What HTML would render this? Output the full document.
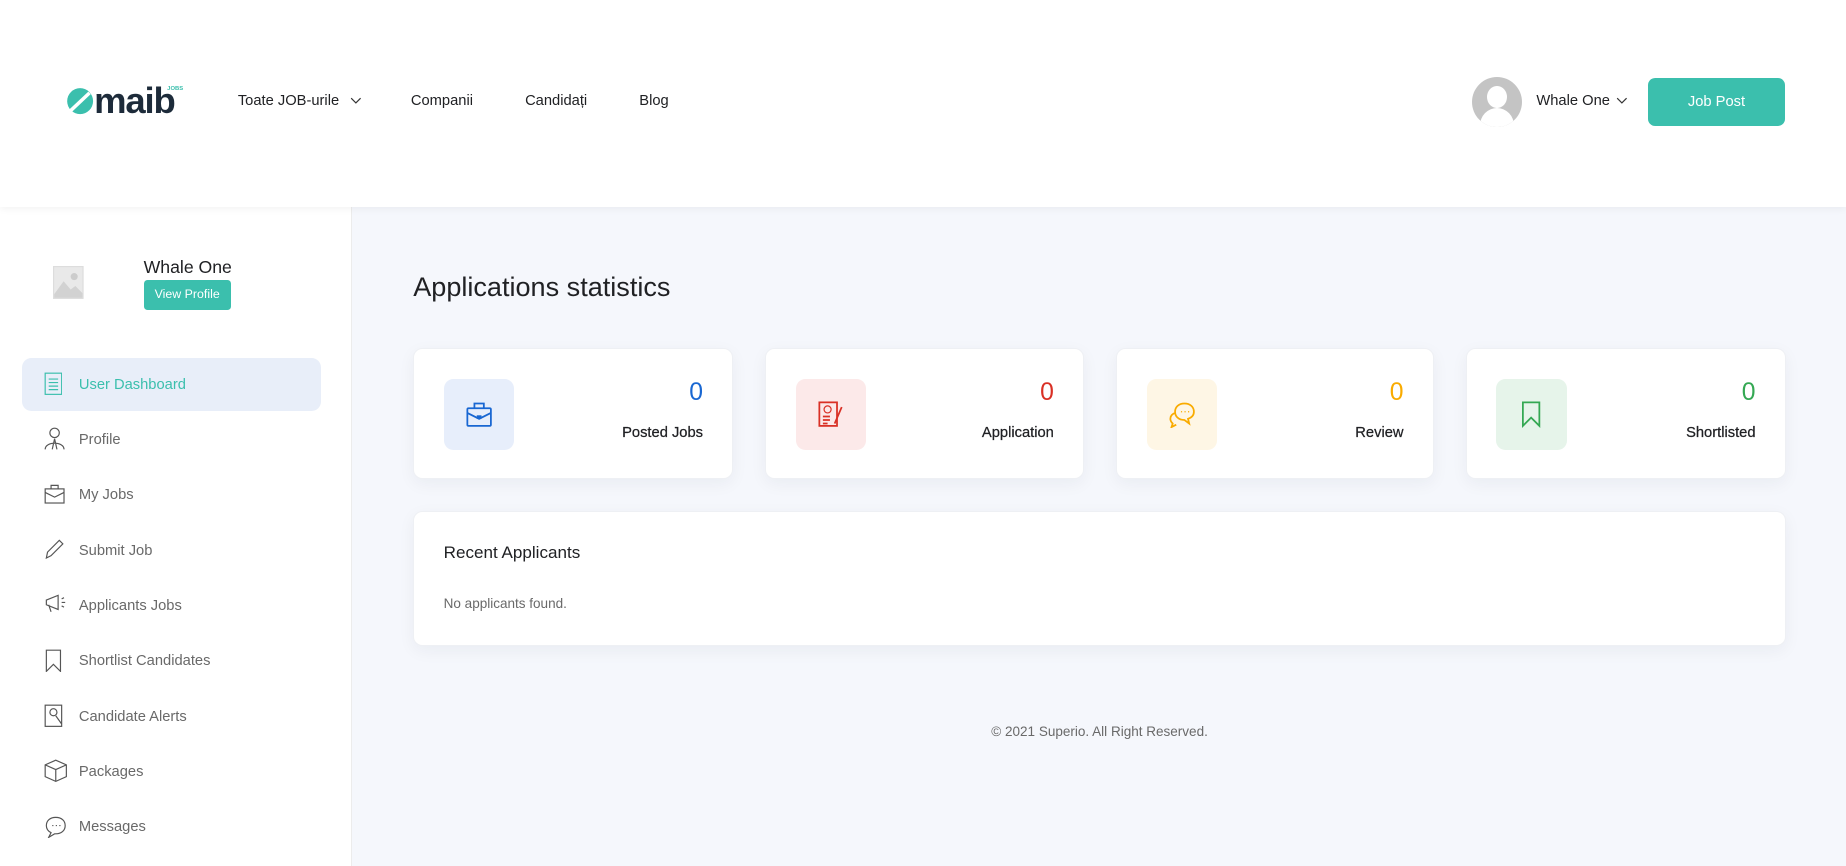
<!DOCTYPE html>
<html><head><meta charset="utf-8"><style>
html,body{margin:0;padding:0;}
body{width:1846px;height:851px;overflow:hidden;background:#f5f7fc;font-family:"Liberation Sans",sans-serif;}
#w{zoom:1.17730;width:1568px;height:723px;position:relative;}
.a{position:absolute;}
header{position:absolute;left:0;top:0;width:1568px;height:176px;background:#fff;box-shadow:0 2px 6px rgba(0,0,0,.05);z-index:2}
.nav{font-size:12.5px;color:#202124;top:79px;}
aside{position:absolute;left:0;top:176px;width:298px;height:560px;background:#fff;border-right:1px solid #ececec}
.mi{position:absolute;left:19px;width:254px;height:45px;font-size:12.5px;color:#696969;}
.mi span{position:absolute;left:48px;top:16px}
.mi svg{position:absolute;left:18px;top:12px}
.card{position:absolute;top:296px;height:111px;background:#fff;border-radius:8px;box-shadow:0 4px 14px rgba(20,30,60,.05);border:1px solid #eef0f4;box-sizing:border-box}
.ib{position:absolute;left:25px;top:25px;width:60px;height:60px;border-radius:8px}
.ib svg{position:absolute;left:18px;top:18px}
.num{position:absolute;right:25px;top:25px;font-size:21px;}
.lab{position:absolute;right:25px;top:64px;font-size:12.5px;color:#202124;font-weight:500;-webkit-text-stroke:0.2px #202124}
</style></head><body><div id="w">
<header>
 <svg class="a" style="left:56px;top:74px" width="24" height="24" viewBox="0 0 24 24"><circle cx="12" cy="12" r="11" fill="#3bbfad"/><path d="M4 20 L20 5" stroke="#fff" stroke-width="3"/></svg>
 <div class="a" style="left:80px;top:68px;font-size:31px;font-weight:bold;color:#1d2b3a;letter-spacing:-1px">maib</div>
 <div class="a" style="left:142px;top:73px;font-size:5px;color:#3bbfad;font-weight:bold">JOBS</div>
 <div class="a nav" style="left:202px">Toate JOB-urile</div>
 <svg class="a" style="left:297px;top:82px" width="10" height="6" viewBox="0 0 10 6"><path d="M1 1 L5 5 L9 1" fill="none" stroke="#333" stroke-width="1"/></svg>
 <div class="a nav" style="left:349px">Companii</div>
 <div class="a nav" style="left:446px">Candidați</div>
 <div class="a nav" style="left:543px">Blog</div>
 <div class="a" style="left:1250px;top:65px;width:43px;height:43px;border-radius:50%;background:#c4c4c4;overflow:hidden">
  <div class="a" style="left:13px;top:8px;width:17px;height:19px;border-radius:50%;background:#fff"></div>
  <div class="a" style="left:7px;top:27px;width:29px;height:30px;border-radius:50%;background:#fff"></div></div>
 <div class="a nav" style="left:1305px">Whale One</div>
 <svg class="a" style="left:1373px;top:82px" width="10" height="6" viewBox="0 0 10 6"><path d="M1 1 L5 5 L9 1" fill="none" stroke="#333" stroke-width="1"/></svg>
 <div class="a" style="left:1400px;top:66px;width:116px;height:41px;background:#3bbfad;border-radius:6px;color:#fff;font-size:12.5px;text-align:center;line-height:41px">Job Post</div>
</header>
<aside>
 <svg class="a" style="left:45px;top:50px" width="26" height="28" viewBox="0 0 26 28"><rect x="0.5" y="0.5" width="25" height="27" fill="#e9e9e9" stroke="#ddd"/><circle cx="18" cy="9" r="3" fill="#ccc"/><path d="M1 24 L9 13 L15 20 L19 17 L25 23 V27 H1Z" fill="#d2d2d2"/></svg>
 <div class="a" style="left:122px;top:42px;font-size:15px;color:#202124">Whale One</div>
 <div class="a" style="left:122px;top:62px;width:74px;height:25px;background:#3bbfad;border-radius:3px;color:#fff;font-size:10.5px;text-align:center;line-height:25px">View Profile</div>
 <div class="mi" style="top:128px;background:#e8eef9;border-radius:8px;color:#3bbfad"><svg width="16" height="20" viewBox="0 0 16 20"><rect x="1" y="1" width="14" height="18" fill="none" stroke="#3bbfad"/><path d="M4 6h8M4 9h8M4 12h8M4 15h8" stroke="#3bbfad"/></svg><span>User Dashboard</span></div>
 <div class="mi" style="top:175px"><svg width="18" height="20" viewBox="0 0 18 20"><circle cx="9" cy="5" r="4" fill="none" stroke="#555"/><path d="M1 19 C1 12 17 12 17 19 M9 10 L7 19 M9 10 L11 19" fill="none" stroke="#555"/></svg><span>Profile</span></div>
 <div class="mi" style="top:222px"><svg width="18" height="18" viewBox="0 0 18 18"><rect x="1" y="5" width="16" height="12" fill="none" stroke="#555"/><path d="M6 5V2h6v3M1 8l8 4 8-4" fill="none" stroke="#555"/></svg><span>My Jobs</span></div>
 <div class="mi" style="top:269px"><svg width="18" height="18" viewBox="0 0 18 18"><path d="M2 17 L3 12 L13 2 L16 5 L6 15Z" fill="none" stroke="#555"/></svg><span>Submit Job</span></div>
 <div class="mi" style="top:316px"><svg width="20" height="18" viewBox="0 0 20 18"><path d="M2 6 L12 2 V14 L2 10Z M4 10 L6 16" fill="none" stroke="#555"/><path d="M15 5l2-1M15 8h3M15 11l2 1" stroke="#555"/></svg><span>Applicants Jobs</span></div>
 <div class="mi" style="top:363px"><svg width="16" height="20" viewBox="0 0 16 20"><path d="M2 1H14V19L8 13L2 19Z" fill="none" stroke="#555"/></svg><span>Shortlist Candidates</span></div>
 <div class="mi" style="top:410px"><svg width="18" height="20" viewBox="0 0 18 20"><rect x="1" y="1" width="14" height="18" fill="none" stroke="#555"/><circle cx="8" cy="7" r="3" fill="none" stroke="#555"/><path d="M10 10l5 7" stroke="#555"/></svg><span>Candidate Alerts</span></div>
 <div class="mi" style="top:457px"><svg width="20" height="20" viewBox="0 0 20 20"><path d="M10 1L19 5V15L10 19L1 15V5Z M1 5L10 9L19 5M10 9V19" fill="none" stroke="#555"/></svg><span>Packages</span></div>
 <div class="mi" style="top:504px"><svg width="20" height="20" viewBox="0 0 20 20"><path d="M10 2C5 2 2 5 2 9c0 3 2 5 4 6l-2 4 5-3h1c5 0 8-3 8-7S15 2 10 2Z" fill="none" stroke="#555"/><path d="M7 9h1M10 9h1M13 9h1" stroke="#555"/></svg><span>Messages</span></div>
</aside>
<div class="a" style="left:351px;top:230px;font-size:23px;color:#202124">Applications statistics</div>
<div class="card" style="left:351px;width:272px"><div class="ib" style="background:#e7eefb"><svg width="24" height="24" viewBox="0 0 24 24"><rect x="2" y="7" width="20" height="15" rx="1" fill="none" stroke="#1967d2" stroke-width="1.5"/><path d="M8 7V3h8v4M2 11l10 5 10-5" fill="none" stroke="#1967d2" stroke-width="1.5"/><rect x="10" y="13" width="4" height="3" fill="#1967d2"/></svg></div><div class="num" style="color:#1967d2">0</div><div class="lab">Posted Jobs</div></div>
<div class="card" style="left:650px;width:271px"><div class="ib" style="background:#fce9e9"><svg width="24" height="24" viewBox="0 0 24 24"><rect x="2" y="2" width="15" height="20" fill="none" stroke="#d93025" stroke-width="1.5"/><circle cx="9" cy="8" r="3" fill="none" stroke="#d93025"/><path d="M5 14h6M5 17h6M5 20h4M21 6L15 20" stroke="#d93025" stroke-width="1.5"/></svg></div><div class="num" style="color:#d93025">0</div><div class="lab">Application</div></div>
<div class="card" style="left:948px;width:270px"><div class="ib" style="background:#fef6e5"><svg width="24" height="24" viewBox="0 0 24 24"><path d="M14 3c-5 0-8 3-8 7s3 7 8 7l4 3-1-4c3-1 5-3 5-6 0-4-3-7-8-7Z M6 11c-3 1-4 3-4 5s1 3 2 4l-1 3 4-2" fill="none" stroke="#f9ab00" stroke-width="1.5"/><path d="M11 10h1M14 10h1M17 10h1" stroke="#f9ab00"/></svg></div><div class="num" style="color:#f9ab00">0</div><div class="lab">Review</div></div>
<div class="card" style="left:1245px;width:272px"><div class="ib" style="background:#e6f4ea"><svg width="24" height="24" viewBox="0 0 24 24"><path d="M5 2H19V22L12 15L5 22Z" fill="none" stroke="#34a853" stroke-width="1.5"/></svg></div><div class="num" style="color:#34a853">0</div><div class="lab">Shortlisted</div></div>
<div class="card" style="left:351px;top:434px;width:1166px;height:115px"><div class="a" style="left:25px;top:26px;font-size:14.5px;color:#202124">Recent Applicants</div><div class="a" style="left:25px;top:71px;font-size:11.5px;color:#696969">No applicants found.</div></div>
<div class="a" style="left:351px;width:1166px;top:615px;text-align:center;font-size:11.5px;color:#696969">© 2021 Superio. All Right Reserved.</div>
</div></body></html>
